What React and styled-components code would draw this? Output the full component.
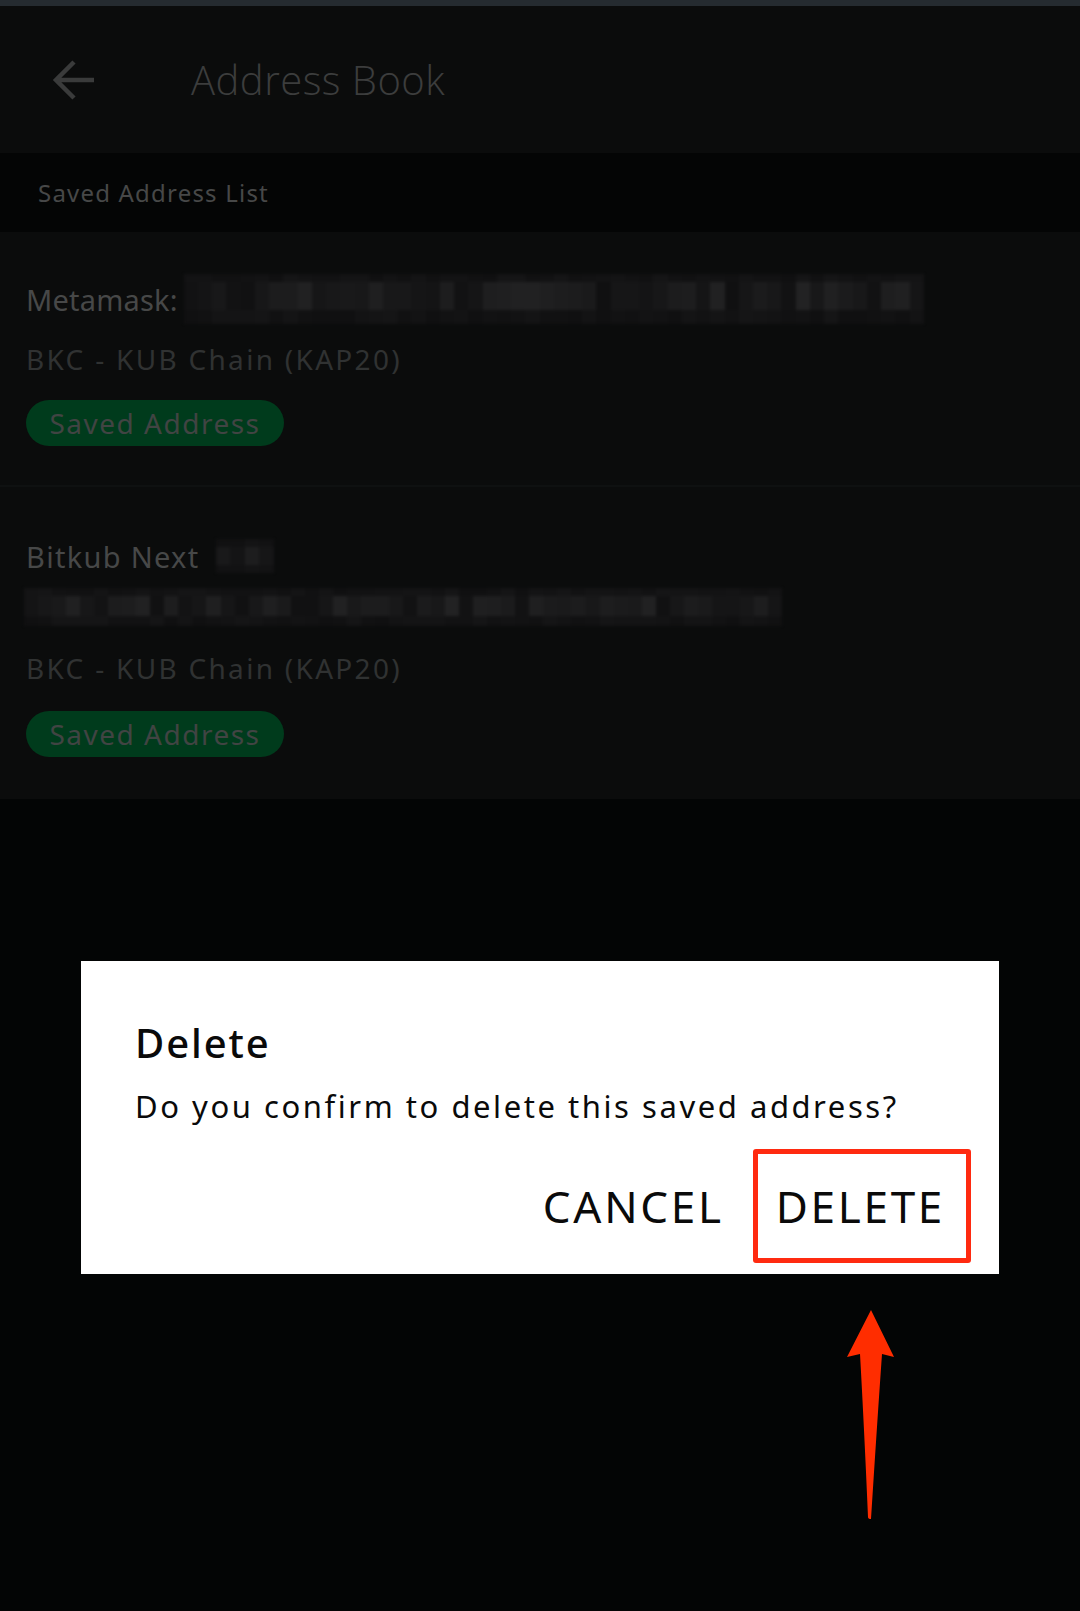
import React from "react";
import styled, { createGlobalStyle } from "styled-components";

const Global = createGlobalStyle`
  html, body { margin: 0; padding: 0; background: #030505; }
  body { font-family: "Noto Sans", "Open Sans", sans-serif; }
  * { box-sizing: border-box; }
`;

const Page = styled.div`
  position: relative;
  width: 1080px;
  min-height: 1611px;
  background: #030505;
  display: flex;
  flex-direction: column;
`;

const StatusStrip = styled.div`
  height: 6px;
  background: #252b30;
`;

const Header = styled.header`
  height: 147px;
  background: #0b0c0c;
  display: flex;
  align-items: center;
  padding-left: 52px;
  gap: 95px;
`;

const BackIcon = styled.svg`
  width: 44px;
  height: 44px;
  display: block;
`;

const Title = styled.h1`
  margin: 0;
  font-family: "Open Sans", sans-serif;
  font-weight: 300;
  font-size: 40px;
  color: #3c3d3d;
  letter-spacing: 0.5px;
`;

const SectionBand = styled.div`
  height: 79px;
  background: #040505;
  display: flex;
  align-items: center;
  padding-left: 38px;
  font-size: 24px;
  color: #474848;
  letter-spacing: 1.2px;
`;

const Card = styled.section`
  background: #0b0c0c;
  padding: ${(p) => p.$pad};
  display: flex;
  flex-direction: column;
  border-bottom: ${(p) => (p.$divider ? "2px solid #0f1111" : "none")};
`;

const Line = styled.div`
  display: flex;
  align-items: center;
  font-size: 29px;
  color: #474848;
  height: ${(p) => p.$h || "auto"};
  gap: ${(p) => p.$gap || "10px"};
  letter-spacing: ${(p) => p.$ls || "0.2px"};
`;

const Network = styled.div`
  font-size: 28px;
  color: #303232;
  letter-spacing: 2.3px;
  margin-top: ${(p) => p.$mt || "0"};
  margin-left: ${(p) => p.$ml || "0"};
`;

const Mosaic = styled.div`
  display: grid;
  grid-template-columns: repeat(${(p) => p.$cols}, 1fr);
  grid-template-rows: ${(p) => p.$rows};
  width: ${(p) => p.$w}px;
  height: ${(p) => p.$h}px;
  margin-top: ${(p) => p.$mt || 0}px;
  flex: none;
  filter: blur(1.6px);
`;

const Cell = styled.div``;

const Badge = styled.div`
  align-self: flex-start;
  width: 258px;
  height: 46px;
  border-radius: 23px;
  background: #003b1c;
  color: #414443;
  font-size: 28px;
  display: flex;
  align-items: center;
  justify-content: center;
  letter-spacing: 1.5px;
  margin-top: ${(p) => p.$mt};
  margin-left: ${(p) => p.$ml || "0"};
`;

const Overlay = styled.div`
  position: absolute;
  inset: 0;
  display: flex;
  justify-content: center;
  align-items: flex-start;
  padding-top: 961px;
`;

const Dialog = styled.div`
  width: 918px;
  height: 313px;
  background: #ffffff;
  padding: 55px 54px 0 54px;
  display: flex;
  flex-direction: column;
`;

const DialogTitle = styled.h2`
  margin: 0;
  font-size: 40px;
  font-weight: 500;
  color: #0a0a0a;
  line-height: 54px;
  letter-spacing: 1.9px;
`;

const DialogText = styled.p`
  margin: 14px 0 0 0;
  font-size: 31px;
  color: #0a0a0a;
  line-height: 44px;
  letter-spacing: 2.55px;
`;

const Actions = styled.div`
  display: flex;
  justify-content: flex-end;
  align-items: center;
  gap: 52px;
  margin-top: 52px;
`;

const ActionButton = styled.button`
  border: none;
  background: none;
  padding: 0;
  font-family: "Noto Sans", sans-serif;
  font-size: 44px;
  color: #0a0a0a;
  line-height: 52px;
  letter-spacing: 2.7px;
  position: relative;
`;

const Highlight = styled.span`
  position: absolute;
  left: -23px;
  right: -26px;
  top: -31px;
  bottom: -31px;
  border: 5px solid #ff2a10;
  border-radius: 3px;
`;

const ArrowMark = styled.svg`
  position: absolute;
  left: 840px;
  top: 1305px;
  width: 60px;
  height: 220px;
`;

function seeded(n, seed) {
  const out = [];
  let s = seed;
  for (let i = 0; i < n; i++) {
    s = (s * 9301 + 49297) % 233280;
    out.push(s / 233280);
  }
  return out;
}

function MosaicBlock({ cols, rows, w, h, mt, seed, base, range, mid }) {
  const rowCount = rows.split(" ").length;
  const vals = seeded(cols * rowCount, seed);
  return (
    <Mosaic $cols={cols} $rows={rows} $w={w} $h={h} $mt={mt}>
      {vals.map((v, i) => {
        const r = Math.floor(i / cols);
        const boost = r === mid ? range : range * 0.3;
        const g = Math.round(base + v * boost);
        return <Cell key={i} style={{ background: `rgb(${g},${g},${g + 1})` }} />;
      })}
    </Mosaic>
  );
}

export default function App() {
  return (
    <Page>
      <Global />
      <StatusStrip />
      <Header>
        <BackIcon viewBox="0 0 44 44">
          <path
            d="M42 22 H4 M22 4 L4 22 L22 40"
            fill="none"
            stroke="#3a3b3b"
            strokeWidth="4.5"
          />
        </BackIcon>
        <Title>Address Book</Title>
      </Header>
      <SectionBand>Saved Address List</SectionBand>

      <Card $pad="42px 0 39px 26px" $divider>
        <Line $h="50px" $gap="6px">
          Metamask:
          <MosaicBlock cols={52} rows="8px 28px 14px" w={740} h={50} seed={7} base={16} range={18} mid={1} />
        </Line>
        <Network $mt="16px">BKC - KUB Chain (KAP20)</Network>
        <Badge $mt="22px">Saved Address</Badge>
      </Card>

      <Card $pad="51px 0 42px 24px">
        <Line $h="36px" $gap="16px" $ls="1.3px">
          <span style={{ marginLeft: 2 }}>Bitkub Next</span>
          <MosaicBlock cols={4} rows="8px 18px 8px" w={58} h={34} seed={3} base={16} range={14} mid={1} />
        </Line>
        <MosaicBlock cols={54} rows="8px 20px 10px" w={758} h={37} mt={14} seed={11} base={16} range={18} mid={1} />
        <Network $mt="24px" $ml="2px">BKC - KUB Chain (KAP20)</Network>
        <Badge $mt="24px" $ml="2px">Saved Address</Badge>
      </Card>

      <Overlay>
        <Dialog>
          <DialogTitle>Delete</DialogTitle>
          <DialogText>Do you confirm to delete this saved address?</DialogText>
          <Actions>
            <ActionButton>CANCEL</ActionButton>
            <ActionButton>
              DELETE
              <Highlight />
            </ActionButton>
          </Actions>
        </Dialog>
      </Overlay>

      <ArrowMark viewBox="0 0 60 220">
        <path
          d="M31 5 L54 52 L42 49 Q37 120 31 214 Q28 214 28 212 Q24 120 20 49 L7 52 Z"
          fill="#ff2d00"
        />
      </ArrowMark>
    </Page>
  );
}
